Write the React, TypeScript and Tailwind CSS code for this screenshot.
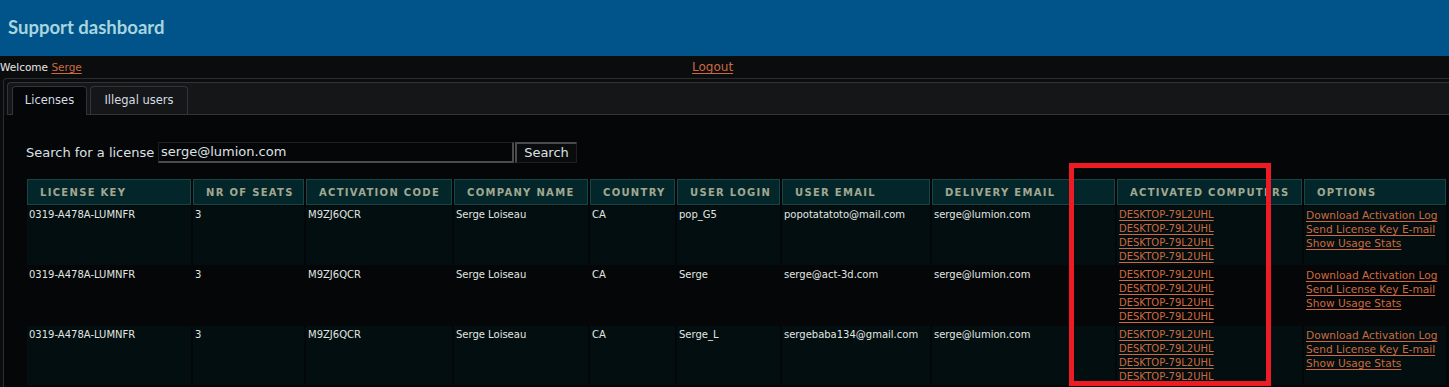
import React from 'react';

const headers = [
  'License Key',
  'Nr of Seats',
  'Activation Code',
  'Company Name',
  'Country',
  'User Login',
  'User Email',
  'Delivery Email',
  'Activated Computers',
  'Options',
];

const rows = [
  { login: 'pop_G5', email: 'popotatatoto@mail.com' },
  { login: 'Serge', email: 'serge@act-3d.com' },
  { login: 'Serge_L', email: 'sergebaba134@gmail.com' },
];

const Link: React.FC<{ children: React.ReactNode; className?: string }> = ({ children, className = '' }) => (
  <a href="#" className={`text-[#cd6a40] underline underline-offset-[2px] ${className}`}>
    {children}
  </a>
);

const DataRow: React.FC<{ login: string; email: string; odd: boolean }> = ({ login, email, odd }) => {
  const bg = odd ? 'bg-[#020e0f]' : 'bg-[#050607]';
  const box = `${bg} h-[59px] pl-[2px] pt-[2px] leading-[14px] text-[#e2e6e2]`;
  const cell = `${box} text-[10px]`;
  return (
    <>
      <div className={cell}>0319-A478A-LUMNFR</div>
      <div className={cell}>3</div>
      <div className={cell}>M9ZJ6QCR</div>
      <div className={cell}>Serge Loiseau</div>
      <div className={cell}>CA</div>
      <div className={cell}>{login}</div>
      <div className={cell}>{email}</div>
      <div className={cell}>serge@lumion.com</div>
      <div className={`${cell} flex flex-col`}>
        <Link>DESKTOP-79L2UHL</Link>
        <Link>DESKTOP-79L2UHL</Link>
        <Link>DESKTOP-79L2UHL</Link>
        <Link>DESKTOP-79L2UHL</Link>
      </div>
      <div className={`${box} text-[10.6px] flex flex-col`}>
        <Link>Download Activation Log</Link>
        <Link>Send License Key E-mail</Link>
        <Link>Show Usage Stats</Link>
      </div>
    </>
  );
};

export default function App() {
  return (
    <div className="relative w-[1449px] h-[387px] overflow-hidden bg-[#0b0c0e] font-['DejaVu_Sans',sans-serif]">
      <header className="h-[56px] bg-[#00548a] flex items-center pl-[8px]">
        <h1 className="font-['Lato',sans-serif] font-bold text-[18.5px] text-[#a8d5de]">Support dashboard</h1>
      </header>

      <div className="h-[22px] flex items-baseline pt-[4px] leading-[14px]">
        <div className="w-[692px] text-[10.5px] text-[#e8e8e8]">
          Welcome <Link>Serge</Link>
        </div>
        <Link className="text-[12px]">Logout</Link>
      </div>

      <div className="ml-[3px] border-l border-t border-[#2c2d2f] rounded-tl-[4px] pt-[3px] pl-[3px] h-[400px]">
        <div className="h-[33px] bg-[#151618] border-l border-t border-b border-[#333437] rounded-tl-[4px] flex items-end gap-[3px] pl-[4px]">
          <div className="w-[75px] h-[29px] -mb-[1px] bg-[#050608] border-l border-t border-r border-[#333437] rounded-t-[4px] flex items-center justify-center text-[11.5px] text-[#d4dde4]">
            Licenses
          </div>
          <div className="w-[98px] h-[28px] bg-[#151618] border-l border-t border-r border-[#333437] rounded-t-[4px] flex items-center justify-center text-[11.5px] text-[#d4dde4]">
            Illegal users
          </div>
        </div>

        <div className="bg-[#050608] h-full -ml-[3px] pl-[2px]">
          <div className="pt-[27px] pl-[20px] flex items-center text-[13px] text-[#dde1e4]">
            <span className="w-[132px] whitespace-nowrap">Search for a license</span>
            <div className="w-[356px] h-[21px] border-t border-l border-t-[#1e1f21] border-l-[#1e1f21] border-b-2 border-r-2 border-b-[#4a4b4d] border-r-[#4a4b4d] bg-[#050608] flex items-center pl-[2px]">
              serge@lumion.com
            </div>
            <div className="ml-[1px] w-[62px] h-[21px] border-t-2 border-l-2 border-t-[#4a4b4d] border-l-[#4a4b4d] border-b border-r border-b-[#1e1f21] border-r-[#1e1f21] bg-[#0a0b0c] flex items-center justify-center">
              Search
            </div>
          </div>

          <div className="mt-[16px] ml-[21px] grid grid-cols-[164px_111px_146px_134px_85px_103px_148px_183px_185px_142px] gap-x-[2px] gap-y-[1px]">
            {headers.map((h) => (
              <div
                key={h}
                className="h-[26px] bg-[#03262a] border border-[#1a4545] pl-[12px] flex items-center text-[10px] font-bold uppercase tracking-[1.3px] text-[#a3a891] whitespace-nowrap"
              >
                {h}
              </div>
            ))}
            {rows.map((r, i) => (
              <DataRow key={i} login={r.login} email={r.email} odd={i % 2 === 0} />
            ))}
          </div>
        </div>
      </div>

      <div className="absolute left-[1069px] top-[163px] w-[202px] h-[223px] border-[5px] border-[#ed1c24]" />
    </div>
  );
}
